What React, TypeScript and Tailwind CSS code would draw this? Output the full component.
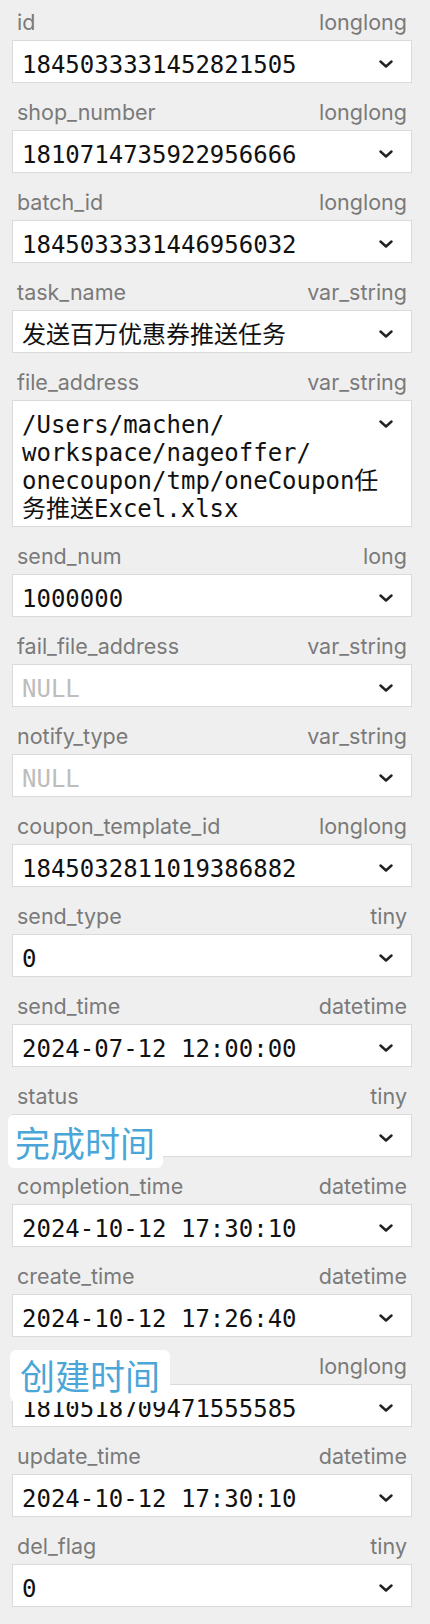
import React from 'react';

interface Field {
  name: string;
  type: string;
  value: string[] | null;
  overlay?: 'status' | 'creator';
}

const FIELDS: Field[] = [
  { name: 'id', type: 'longlong', value: ['1845033331452821505'] },
  { name: 'shop_number', type: 'longlong', value: ['1810714735922956666'] },
  { name: 'batch_id', type: 'longlong', value: ['1845033331446956032'] },
  { name: 'task_name', type: 'var_string', value: ['发送百万优惠券推送任务'] },
  {
    name: 'file_address',
    type: 'var_string',
    value: ['/Users/machen/', 'workspace/nageoffer/', 'onecoupon/tmp/oneCoupon任', '务推送Excel.xlsx']
  },
  { name: 'send_num', type: 'long', value: ['1000000'] },
  { name: 'fail_file_address', type: 'var_string', value: null },
  { name: 'notify_type', type: 'var_string', value: null },
  { name: 'coupon_template_id', type: 'longlong', value: ['1845032811019386882'] },
  { name: 'send_type', type: 'tiny', value: ['0'] },
  { name: 'send_time', type: 'datetime', value: ['2024-07-12 12:00:00'] },
  { name: 'status', type: 'tiny', value: [''], overlay: 'status' },
  { name: 'completion_time', type: 'datetime', value: ['2024-10-12 17:30:10'] },
  { name: 'create_time', type: 'datetime', value: ['2024-10-12 17:26:40'] },
  // label of this one sits under the 创建时间 tag
  { name: '', type: 'longlong', value: ['1810518709471555585'], overlay: 'creator' },
  { name: 'update_time', type: 'datetime', value: ['2024-10-12 17:30:10'] },
  { name: 'del_flag', type: 'tiny', value: ['0'] }
];

const LABEL_FONT = "font-['Inter','Noto_Sans',sans-serif]";
const MONO_FONT = "font-['DejaVu_Sans_Mono','Noto_Sans_CJK_SC',monospace]";

function Chevron() {
  return (
    <svg width="14" height="8" viewBox="0 0 14 8" className="shrink-0 mt-[9px]">
      <path d="M1.5 1.5 L7 6.5 L12.5 1.5" fill="none" stroke="#222" strokeWidth="2.4" strokeLinecap="round" strokeLinejoin="round" />
    </svg>
  );
}

function Tag({ text, kind }: { text: string; kind: 'status' | 'creator' }) {
  const pos =
    kind === 'status'
      ? 'left-[8px] top-[41px] w-[155px] h-[53px] pl-[7px] pt-[9px]'
      : 'left-[10px] top-[6px] w-[160px] h-[52px] pl-[10px] pt-[7px]';
  return (
    <div className={`absolute z-10 bg-white rounded-[6px] ${pos}`}>
      <span className="block text-[35px] leading-[35px] text-[#4aa6d8] whitespace-nowrap font-['Noto_Sans_CJK_SC',sans-serif]">
        {text}
      </span>
    </div>
  );
}

function FieldRow({ field, last }: { field: Field; last: boolean }) {
  return (
    <div className={`relative ${last ? 'pb-[17px]' : 'pb-[7px]'}`}>
      <div className={`h-[40px] pt-[8px] pl-[17px] pr-[23px] flex justify-between text-[21.5px] leading-[28px] text-[#7a7a7a] ${LABEL_FONT}`}>
        <span>{field.name}</span>
        <span>{field.type}</span>
      </div>
      <div className="ml-[12px] w-[400px] bg-white border border-[#dadada] pl-[9px] pr-[18px] pt-[10px] pb-[3px] flex items-start">
        <div className={`flex-1 text-[24px] leading-[28px] whitespace-nowrap ${MONO_FONT} ${field.value ? 'text-[#111]' : 'text-[#bdbdbd]'}`}>
          {field.value
            ? field.value.map((line, i) => (
                <div key={i} className="h-[28px]">{line}</div>
              ))
            : <div className="h-[28px]">NULL</div>}
        </div>
        <Chevron />
      </div>
      {field.overlay === 'status' && <Tag text="完成时间" kind="status" />}
      {field.overlay === 'creator' && <Tag text="创建时间" kind="creator" />}
    </div>
  );
}

export default function App() {
  return (
    <div className="w-[430px] min-h-[1624px] bg-[#efefef]">
      {FIELDS.map((f, i) => (
        <FieldRow key={i} field={f} last={i === FIELDS.length - 1} />
      ))}
    </div>
  );
}
